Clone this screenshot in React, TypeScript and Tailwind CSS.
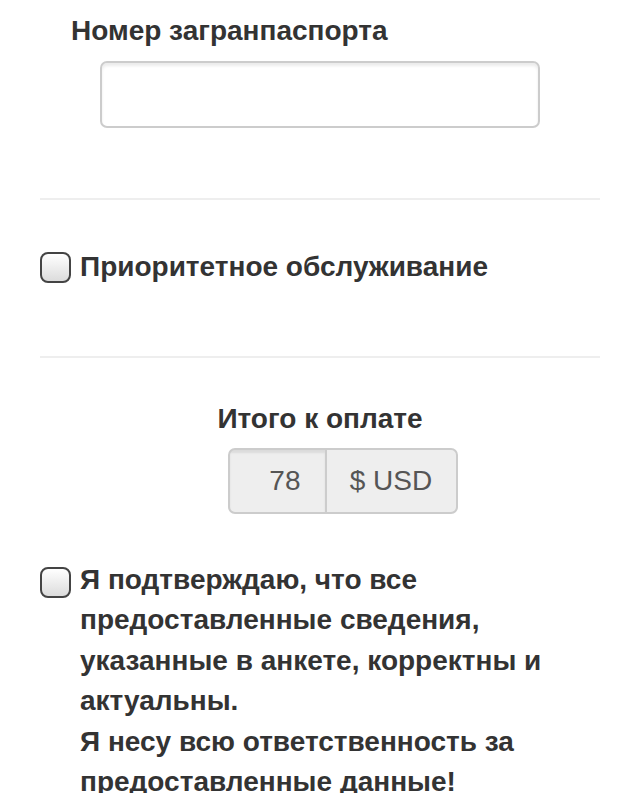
import { useState } from 'react';

const font = { fontFamily: '"Liberation Sans", Arial, sans-serif' };

const Checkbox = ({ checked, onChange }: { checked: boolean; onChange: () => void }) => {
  return (
    <button
      type="button"
      onClick={onChange}
      className="w-[31px] h-[31px] shrink-0 rounded-[8px] border-2 border-[#444] bg-gradient-to-b from-white to-[#dcdcdc]"
    >
      {checked ? <span className="block text-[#333] text-lg leading-none">✓</span> : null}
    </button>
  );
};

export default function App() {
  const [priority, setPriority] = useState(false);
  const [agree, setAgree] = useState(false);

  return (
    <main className="w-[640px] h-[793px] overflow-hidden bg-white text-[#333]" style={font}>
      <div className="px-10">
        {/* passport */}
        <div className="pt-[14px] pb-[70px]">
          <p className="pl-[31px] text-[28px] font-bold leading-[34px]">Номер загранпаспорта</p>
          <div className="flex justify-center mt-[13px]">
            <input
              type="text"
              className="w-[440px] h-[67px] rounded-[7px] border-2 border-[#ccc] bg-white shadow-[inset_0_3px_3px_rgba(0,0,0,0.08)] outline-none px-3 text-[24px]"
            />
          </div>
        </div>

        <div className="border-t-2 border-[#eee]" />

        {/* priority */}
        <div className="flex items-center gap-[9px] pt-[50px] pb-[72px]">
          <Checkbox checked={priority} onChange={() => setPriority(!priority)} />
          <span className="text-[28px] font-bold leading-[34px]">Приоритетное обслуживание</span>
        </div>

        <div className="border-t-2 border-[#eee]" />

        {/* total */}
        <div className="flex flex-col items-center pt-[44px]">
          <p className="text-[28px] font-bold leading-[34px]">Итого к оплате</p>
          <div className="flex ml-[45px] mt-[12px] h-[66px] rounded-[7px] border-2 border-[#ccc] bg-[#eee] text-[#555] text-[28px] overflow-hidden">
            <div className="w-[97px] flex items-center justify-end pr-[24px] border-r-2 border-[#ccc] shadow-[inset_0_3px_2px_rgba(0,0,0,0.08)]">
              78
            </div>
            <div className="w-[129px] flex items-center justify-center">$ USD</div>
          </div>
        </div>

        {/* confirmation */}
        <div className="flex gap-[9px] pt-[51px]">
          <div className="pt-[2px]">
            <Checkbox checked={agree} onChange={() => setAgree(!agree)} />
          </div>
          <p className="text-[28px] font-bold leading-[40.4px] -mt-[5px]">
            Я подтверждаю, что все
            <br />
            предоставленные сведения,
            <br />
            указанные в анкете, корректны и
            <br />
            актуальны.
            <br />
            Я несу всю ответственность за
            <br />
            предоставленные данные!
          </p>
        </div>
      </div>
    </main>
  );
}
